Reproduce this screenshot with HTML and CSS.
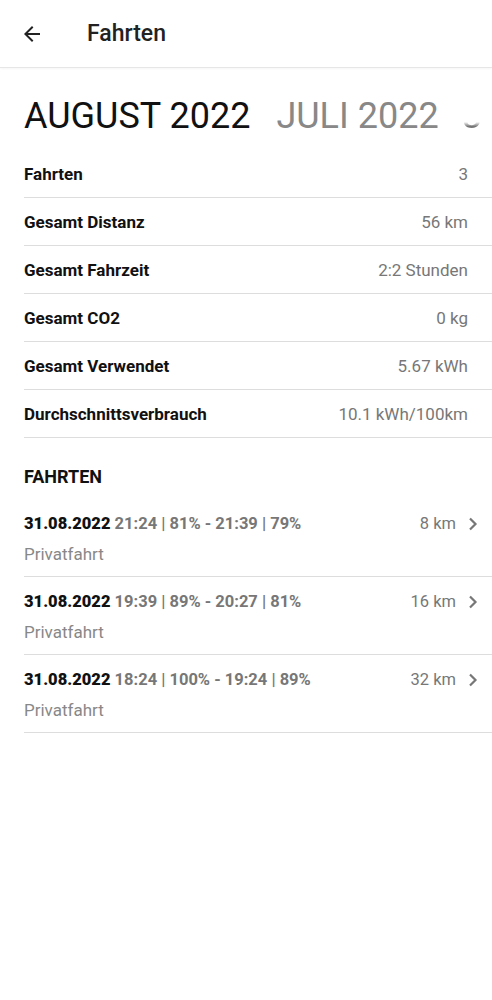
FILE: index.html
```html
<!doctype html>
<html lang="de">
<head>
    <meta charset="UTF-8">
    <title>Fahrten</title>
	<link rel="stylesheet" href="styles.css">
</head>
<body>
	<div class="topbar">
		<svg class="back" viewBox="0 0 24 24" width="24" height="24"><path d="M20 11H7.83l5.59-5.59L12 4l-8 8 8 8 1.41-1.41L7.83 13H20v-2z" fill="#222"/></svg>
		<span class="title">Fahrten</span>
	</div>

	<div class="months">
		<span class="month active">AUGUST 2022</span>
		<span class="month">JULI 2022</span>
		<span class="month far">J</span>
	</div>

	<ul class="stats">
		<li><b>Fahrten</b><span>3</span></li>
		<li><b>Gesamt Distanz</b><span>56 km</span></li>
		<li><b>Gesamt Fahrzeit</b><span>2:2 Stunden</span></li>
		<li><b>Gesamt CO2</b><span>0 kg</span></li>
		<li><b>Gesamt Verwendet</b><span>5.67 kWh</span></li>
		<li><b>Durchschnittsverbrauch</b><span>10.1 kWh/100km</span></li>
	</ul>

	<h2 class="section">FAHRTEN</h2>

	<ul class="trips">
		<li>
			<div class="line1">
				<span class="when"><b>31.08.2022</b> 21:24 | 81% - 21:39 | 79%</span>
				<span class="dist">8 km</span>
				<svg class="chev" viewBox="0 0 10 14" width="10" height="14"><path d="M2 1.5l5.5 5.5L2 12.5" fill="none" stroke="#777" stroke-width="2.2"/></svg>
			</div>
			<div class="kind">Privatfahrt</div>
		</li>
		<li>
			<div class="line1">
				<span class="when"><b>31.08.2022</b> 19:39 | 89% - 20:27 | 81%</span>
				<span class="dist">16 km</span>
				<svg class="chev" viewBox="0 0 10 14" width="10" height="14"><path d="M2 1.5l5.5 5.5L2 12.5" fill="none" stroke="#777" stroke-width="2.2"/></svg>
			</div>
			<div class="kind">Privatfahrt</div>
		</li>
		<li>
			<div class="line1">
				<span class="when"><b>31.08.2022</b> 18:24 | 100% - 19:24 | 89%</span>
				<span class="dist">32 km</span>
				<svg class="chev" viewBox="0 0 10 14" width="10" height="14"><path d="M2 1.5l5.5 5.5L2 12.5" fill="none" stroke="#777" stroke-width="2.2"/></svg>
			</div>
			<div class="kind">Privatfahrt</div>
		</li>
	</ul>
</body>
</html>
```

FILE: styles.css
```css
*{
	margin:0;
	padding:0;
	box-sizing:border-box;
}
body{
	font-family:Roboto, "Liberation Sans", sans-serif;
	background:#fff;
	color:#111;
	overflow-x:hidden;
}
li{
	list-style:none;
}
.topbar{
	height:68px;
	display:flex;
	align-items:center;
	padding-left:20px;
	border-bottom:1px solid #e6e6e6;
	box-shadow:0 1px 2px rgba(0,0,0,0.04);
}
.back{
	display:block;
	margin-top:1px;
}
.title{
	margin-left:43px;
	font-size:23px;
	font-weight:500;
	color:#222;
}
.months{
	display:flex;
	gap:26px;
	padding:26px 0 0 24px;
	height:82px;
	white-space:nowrap;
	overflow:hidden;
}
.month{
	display:block;
	flex:none;
	font-size:36px;
	color:#888;
	line-height:44px;
}
.month.active{
	color:#111;
}
.month.far{
	color:#777;
	margin-left:-2px;
	-webkit-mask-image:linear-gradient(to bottom, transparent 0, transparent 50%, #000 58%);
	mask-image:linear-gradient(to bottom, transparent 0, transparent 50%, #000 58%);
}
.stats{
	margin-left:24px;
}
.stats li{
	display:flex;
	justify-content:space-between;
	align-items:center;
	height:48px;
	padding-right:24px;
	border-bottom:1px solid #ddd;
	font-size:17px;
}
.stats li b{
	font-weight:700;
	color:#111;
}
.stats li span{
	color:#777;
}
.section{
	font-size:18px;
	font-weight:700;
	margin:28px 24px 0;
	line-height:22px;
}
.trips{
	margin-left:24px;
	margin-top:11px;
}
.trips li{
	height:78px;
	padding:15px 14px 0 0;
	border-bottom:1px solid #ddd;
}
.line1{
	display:flex;
	align-items:center;
	font-size:16.5px;
	line-height:20px;
}
.when{
	flex:1;
	color:#777;
	font-weight:700;
}
.when b{
	color:#111;
}
.dist{
	color:#777;
	margin-right:12px;
}
.chev{
	display:block;
}
.kind{
	margin-top:10px;
	font-size:17px;
	color:#888;
	line-height:20px;
}
```
